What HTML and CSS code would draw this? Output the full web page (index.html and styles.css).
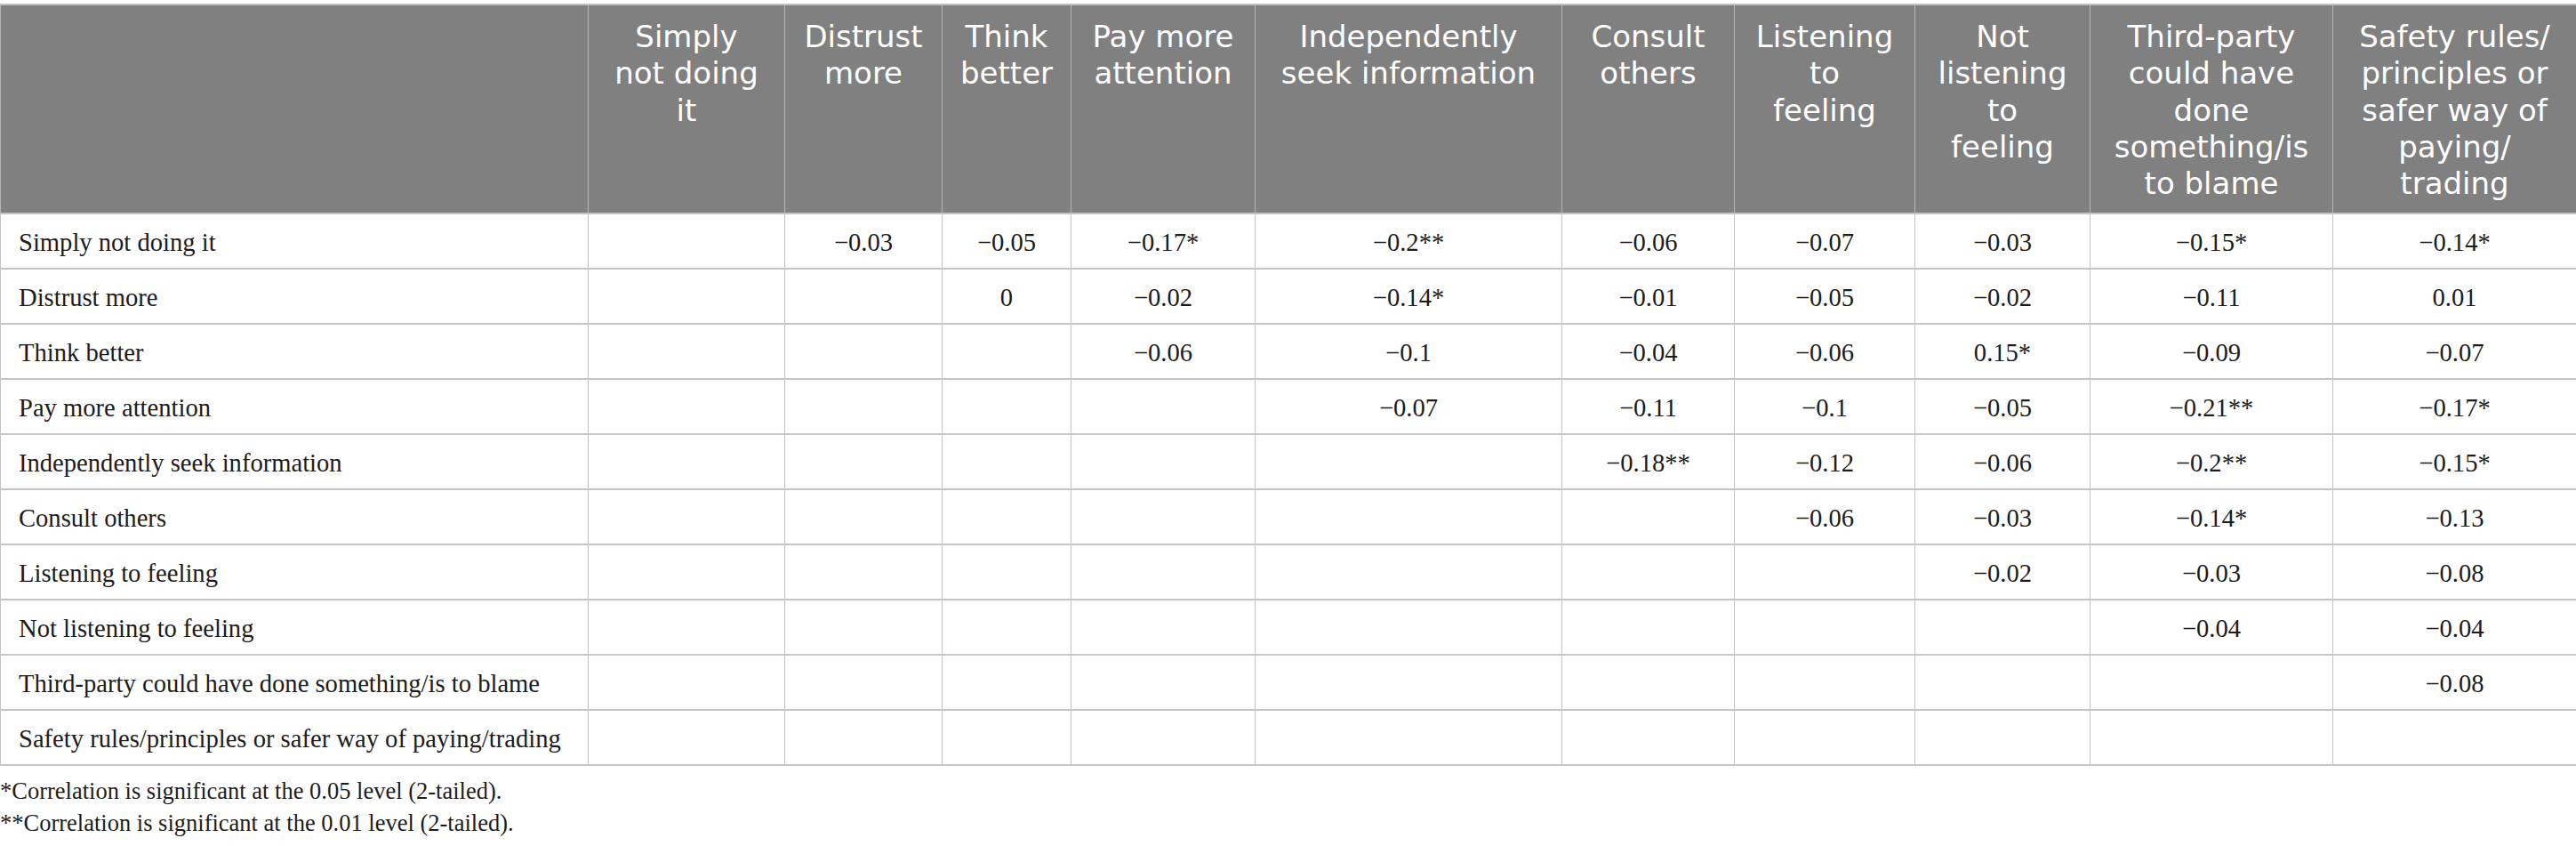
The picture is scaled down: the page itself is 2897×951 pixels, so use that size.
FILE: index.html
```html
<!DOCTYPE html>
<html lang="en">
<head>
<meta charset="utf-8">
<title>Correlation table</title>
<link rel="stylesheet" href="styles.css">
</head>
<body>
<div class="page">
<table class="corr">
<colgroup>
<col class="c-label"><col class="c-simply"><col class="c-distrust"><col class="c-think"><col class="c-pay"><col class="c-indep"><col class="c-consult"><col class="c-listen"><col class="c-notlisten"><col class="c-third"><col class="c-safety">
</colgroup>
<thead>
<tr>
<th></th>
<th>Simply<br>not doing<br>it</th>
<th>Distrust<br>more</th>
<th>Think<br>better</th>
<th>Pay more<br>attention</th>
<th>Independently<br>seek information</th>
<th>Consult<br>others</th>
<th>Listening<br>to<br>feeling</th>
<th>Not<br>listening<br>to<br>feeling</th>
<th>Third-party<br>could have<br>done<br>something/is<br>to blame</th>
<th>Safety rules/<br>principles or<br>safer way of<br>paying/<br>trading</th>
</tr>
</thead>
<tbody>
<tr><td class="label">Simply not doing it</td><td></td><td>−0.03</td><td>−0.05</td><td>−0.17*</td><td>−0.2**</td><td>−0.06</td><td>−0.07</td><td>−0.03</td><td>−0.15*</td><td>−0.14*</td></tr>
<tr><td class="label">Distrust more</td><td></td><td></td><td>0</td><td>−0.02</td><td>−0.14*</td><td>−0.01</td><td>−0.05</td><td>−0.02</td><td>−0.11</td><td>0.01</td></tr>
<tr><td class="label">Think better</td><td></td><td></td><td></td><td>−0.06</td><td>−0.1</td><td>−0.04</td><td>−0.06</td><td>0.15*</td><td>−0.09</td><td>−0.07</td></tr>
<tr><td class="label">Pay more attention</td><td></td><td></td><td></td><td></td><td>−0.07</td><td>−0.11</td><td>−0.1</td><td>−0.05</td><td>−0.21**</td><td>−0.17*</td></tr>
<tr><td class="label">Independently seek information</td><td></td><td></td><td></td><td></td><td></td><td>−0.18**</td><td>−0.12</td><td>−0.06</td><td>−0.2**</td><td>−0.15*</td></tr>
<tr><td class="label">Consult others</td><td></td><td></td><td></td><td></td><td></td><td></td><td>−0.06</td><td>−0.03</td><td>−0.14*</td><td>−0.13</td></tr>
<tr><td class="label">Listening to feeling</td><td></td><td></td><td></td><td></td><td></td><td></td><td></td><td>−0.02</td><td>−0.03</td><td>−0.08</td></tr>
<tr><td class="label">Not listening to feeling</td><td></td><td></td><td></td><td></td><td></td><td></td><td></td><td></td><td>−0.04</td><td>−0.04</td></tr>
<tr><td class="label">Third-party could have done something/is to blame</td><td></td><td></td><td></td><td></td><td></td><td></td><td></td><td></td><td></td><td>−0.08</td></tr>
<tr><td class="label">Safety rules/principles or safer way of paying/trading</td><td></td><td></td><td></td><td></td><td></td><td></td><td></td><td></td><td></td><td></td></tr>
</tbody>
</table>
<div class="notes">
<p>*Correlation is significant at the 0.05 level (2-tailed).</p>
<p>**Correlation is significant at the 0.01 level (2-tailed).</p>
</div>
</div>
</body>
</html>
```

FILE: styles.css
```css
html, body {
  margin: 0;
  padding: 0;
  background: #ffffff;
}

.page {
  padding-top: 4px;
  width: 2897px;
}

.corr {
  width: 2897px;
  table-layout: fixed;
  border-collapse: collapse;
  font-family: "Liberation Serif", "Times New Roman", serif;
  color: #1c1c1c;
}

.c-label { width: 661px; }
.c-simply { width: 221px; }
.c-distrust { width: 177px; }
.c-think { width: 145px; }
.c-pay { width: 207px; }
.c-indep { width: 345px; }
.c-consult { width: 194px; }
.c-listen { width: 203px; }
.c-notlisten { width: 197px; }
.c-third { width: 273px; }
.c-safety { width: 274px; }

.corr th {
  background: #7f807f;
  color: #ffffff;
  font-family: "DejaVu Sans", "Open Sans", sans-serif;
  font-weight: 400;
  font-size: 34px;
  line-height: 41.25px;
  text-align: center;
  vertical-align: top;
  padding: 15px 4px 12px;
  white-space: nowrap;
  border-top: 2px solid #c3c3c3;
  border-left: 1px solid #b4b4b4;
  border-right: 1px solid #b4b4b4;
  border-bottom: 2px solid #c3c3c3;
}

.corr td {
  font-size: 28.6px;
  line-height: 34px;
  padding: 15px 8px 11px;
  text-align: center;
  vertical-align: middle;
  white-space: nowrap;
  border-left: 1px solid #c4c4c4;
  border-right: 1px solid #c4c4c4;
  border-bottom: 2px solid #c6c6c6;
}

.corr td.label {
  text-align: left;
  padding-left: 20px;
}

.notes {
  margin-top: 10px;
  font-family: "Liberation Serif", "Times New Roman", serif;
  font-size: 26.5px;
  line-height: 36px;
  color: #1c1c1c;
}

.notes p {
  margin: 0;
}
```
